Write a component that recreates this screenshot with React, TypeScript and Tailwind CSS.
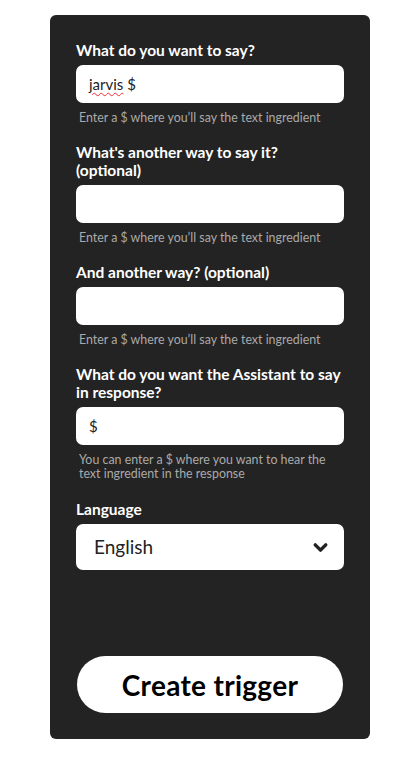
import { ChevronDown } from 'lucide-react'

const font = { fontFamily: 'Lato, "Open Sans", sans-serif' }

function Field({
  label,
  value,
  help,
}: {
  label: React.ReactNode
  value?: React.ReactNode
  help: React.ReactNode
}) {
  return (
    <div className="flex flex-col">
      <label className="text-[15.5px] leading-[18px] font-bold text-white">{label}</label>
      <div className="mt-[6px] h-[38px] rounded-[7px] bg-white flex items-center px-[13px] text-[15px] text-[#222]">
        {value}
      </div>
      <p className="mt-[8px] text-[12.4px] leading-[14px] text-[#aaaaaa] pl-[3px]">{help}</p>
    </div>
  )
}

export default function App() {
  const help = 'Enter a $ where you\u2019ll say the text ingredient'
  return (
    <div className="min-h-[765px] bg-white pt-[15px]" style={font}>
      <div className="ml-[50px] w-[320px] h-[724px] bg-[#232323] rounded-[6px] px-[26px] pt-[26px] flex flex-col">
        <div className="flex flex-col gap-[18px]">
          <Field
            label="What do you want to say?"
            value={
              <span>
                <span className="underline decoration-wavy decoration-red-500 decoration-1 underline-offset-2">jarvis</span> $
              </span>
            }
            help={help}
          />
          <Field
            label={
              <>
                What's another way to say it?
                <br />
                (optional)
              </>
            }
            help={help}
          />
          <Field label="And another way? (optional)" help={help} />
          <Field
            label={
              <>
                What do you want the Assistant to say
                <br />
                in response?
              </>
            }
            value="$"
            help={
              <>
                You can enter a $ where you want to hear the
                <br />
                text ingredient in the response
              </>
            }
          />
          <div className="flex flex-col mt-[1px]">
            <label className="text-[15.5px] leading-[18px] font-bold text-white">Language</label>
            <div className="mt-[6px] h-[46px] rounded-[7px] bg-white flex items-center justify-between pl-[18px] pr-[13px] text-[19px] text-[#222]">
              <span>English</span>
              <ChevronDown className="w-[21px] h-[21px]" strokeWidth={4} />
            </div>
          </div>
        </div>
        <button className="mt-[86px] mx-[1px] h-[57px] rounded-full bg-white text-black text-[28px] font-bold tracking-[0.3px]">
          Create trigger
        </button>
      </div>
    </div>
  )
}
